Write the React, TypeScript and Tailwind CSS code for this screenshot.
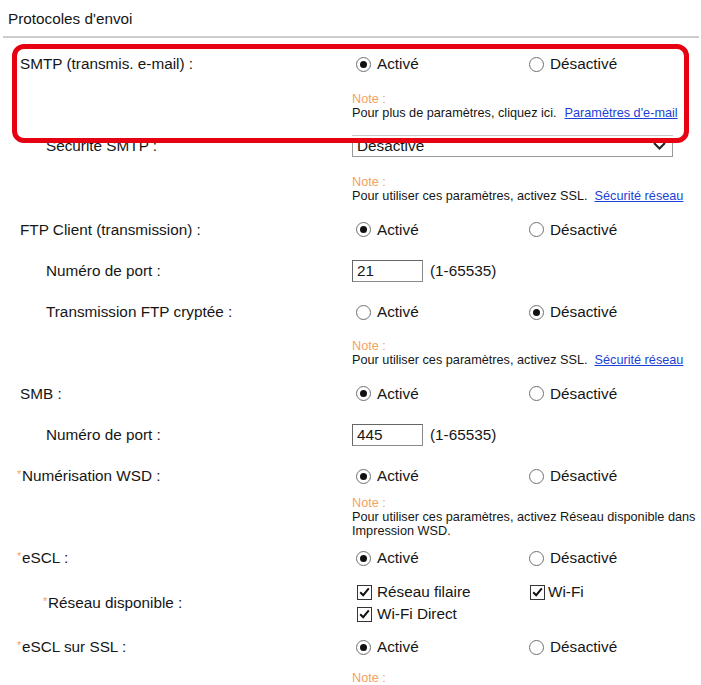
import React from 'react'

function Radio({ checked }: { checked: boolean }) {
  return (
    <span className="flex h-[15px] w-[15px] shrink-0 items-center justify-center rounded-full border border-[#707070] bg-white">
      {checked && <span className="h-[7px] w-[7px] rounded-full bg-[#111]" />}
    </span>
  )
}

function Check() {
  return (
    <span className="flex h-[15px] w-[15px] shrink-0 items-center justify-center border border-[#333] bg-white">
      <svg width="11" height="10" viewBox="0 0 11 10">
        <path d="M1.2 5.2 L4.2 8.2 L9.8 1.4" fill="none" stroke="#111" strokeWidth="2" />
      </svg>
    </span>
  )
}

function OnOff({ on }: { on: boolean }) {
  return (
    <div className="flex items-center">
      <div className="flex w-[177px] items-center gap-[6px] pl-[4px]">
        <Radio checked={on} />
        <span>Activé</span>
      </div>
      <div className="flex items-center gap-[6px]">
        <Radio checked={!on} />
        <span>Désactivé</span>
      </div>
    </div>
  )
}

function Label({ text, sub, star }: { text: string; sub?: boolean; star?: boolean }) {
  const pad = star ? (sub ? 'pl-[43px]' : 'pl-[17px]') : sub ? 'pl-[46px]' : 'pl-[20px]'
  return (
    <div className={`flex w-[352px] shrink-0 items-center ${pad}`}>
      {star && <span className="mt-[2px] w-[5px] self-start text-[11px] leading-[11px] text-[#f5a25d]">*</span>}
      <span>{text}</span>
    </div>
  )
}

function Row({ label, sub, star, h, className, children }: {
  label: string; sub?: boolean; star?: boolean; h: string; className?: string; children: React.ReactNode
}) {
  return (
    <div className={`flex items-center ${h} ${className ?? ''}`}>
      <Label text={label} sub={sub} star={star} />
      {children}
    </div>
  )
}

function Note({ className, children }: { className?: string; children?: React.ReactNode }) {
  return (
    <div className={`whitespace-nowrap pl-[352px] text-[12.7px] leading-[14px] ${className ?? ''}`}>
      <div className="text-[#f5a25d]">Note :</div>
      {children && <div>{children}</div>}
    </div>
  )
}

function Link({ children }: { children: React.ReactNode }) {
  return <span className="ml-[7px] text-[#1c3fd6] underline">{children}</span>
}

function Port({ value }: { value: string }) {
  return (
    <div className="flex items-center">
      <div className="flex h-[22px] w-[71px] items-center border border-[#8a8a8a] border-t-[#666] border-l-[#666] pl-[4px]">
        {value}
      </div>
      <span className="ml-[7px]">(1-65535)</span>
    </div>
  )
}

export default function App() {
  return (
    <div className="h-[685px] w-[701px] overflow-hidden bg-white font-['Liberation_Sans',Arial,sans-serif] text-[15.3px] leading-[18px] text-[#161616]">
      <div className="flex h-[38px] items-center pl-[8px]">Protocoles d'envoi</div>
      <div className="ml-[3px] mr-[2px] h-[2px] -mt-[2px] bg-[#cdcdcd]" />

      {/* encadré rouge */}
      <div className="relative z-10 mx-[12px] mt-[6px] -mb-[8px] rounded-[12px] border-[5px] border-[#e60012] bg-white pb-[2px]">
        <div className="-ml-[17px]">
          <Row label="SMTP (transmis. e-mail) :" h="h-[30px]">
            <OnOff on />
          </Row>
          <Note className="mt-[13px]">
            Pour plus de paramètres, cliquez ici.<span className="ml-[1px]" />
            <Link>Paramètres d'e-mail</Link>
          </Note>
          <div className="ml-[352px] mt-[15px] h-px w-[321px] bg-[#c8c8c8]" />
        </div>
      </div>

      <Row label="Sécurité SMTP :" sub h="h-[22px]">
        <div className="flex h-[22px] w-[321px] items-center justify-between border border-[#9a9a9a] pl-[4px] pr-[6px]">
          <span>Désactivé</span>
          <svg width="13" height="8" viewBox="0 0 13 8">
            <path d="M1 1 L6.5 6.5 L12 1" fill="none" stroke="#222" strokeWidth="2" />
          </svg>
        </div>
      </Row>
      <Note className="mt-[18px]">
        Pour utiliser ces paramètres, activez SSL.<Link>Sécurité réseau</Link>
      </Note>

      <Row label="FTP Client (transmission) :" h="h-[41px]" className="mt-[6px]">
        <OnOff on />
      </Row>
      <Row label="Numéro de port :" sub h="h-[41px]">
        <Port value="21" />
      </Row>
      <Row label="Transmission FTP cryptée :" sub h="h-[42px]">
        <OnOff on={false} />
      </Row>
      <Note className="mt-[6px]">
        Pour utiliser ces paramètres, activez SSL.<Link>Sécurité réseau</Link>
      </Note>

      <Row label="SMB :" h="h-[41px]" className="mt-[6px]">
        <OnOff on />
      </Row>
      <Row label="Numéro de port :" sub h="h-[42px]">
        <Port value="445" />
      </Row>
      <Row label="Numérisation WSD :" star h="h-[40px]">
        <OnOff on />
      </Row>
      <Note>
        Pour utiliser ces paramètres, activez Réseau disponible dans
        <br />
        Impression WSD.
      </Note>

      <Row label="eSCL :" star h="h-[40px]">
        <OnOff on />
      </Row>
      <div className="mt-[3px] flex items-center">
        <Label text="Réseau disponible :" sub star />
        <div className="flex flex-col">
          <div className="flex h-[22px] items-center">
            <div className="flex w-[178px] items-center gap-[5px] pl-[5px]">
              <Check />
              <span>Réseau filaire</span>
            </div>
            <div className="flex items-center gap-[3px]">
              <Check />
              <span>Wi-Fi</span>
            </div>
          </div>
          <div className="flex h-[22px] items-center gap-[5px] pl-[5px]">
            <Check />
            <span>Wi-Fi Direct</span>
          </div>
        </div>
      </div>
      <Row label="eSCL sur SSL :" star h="h-[40px]" className="mt-[2px]">
        <OnOff on />
      </Row>
      <Note className="mt-[4px]" />
    </div>
  )
}
